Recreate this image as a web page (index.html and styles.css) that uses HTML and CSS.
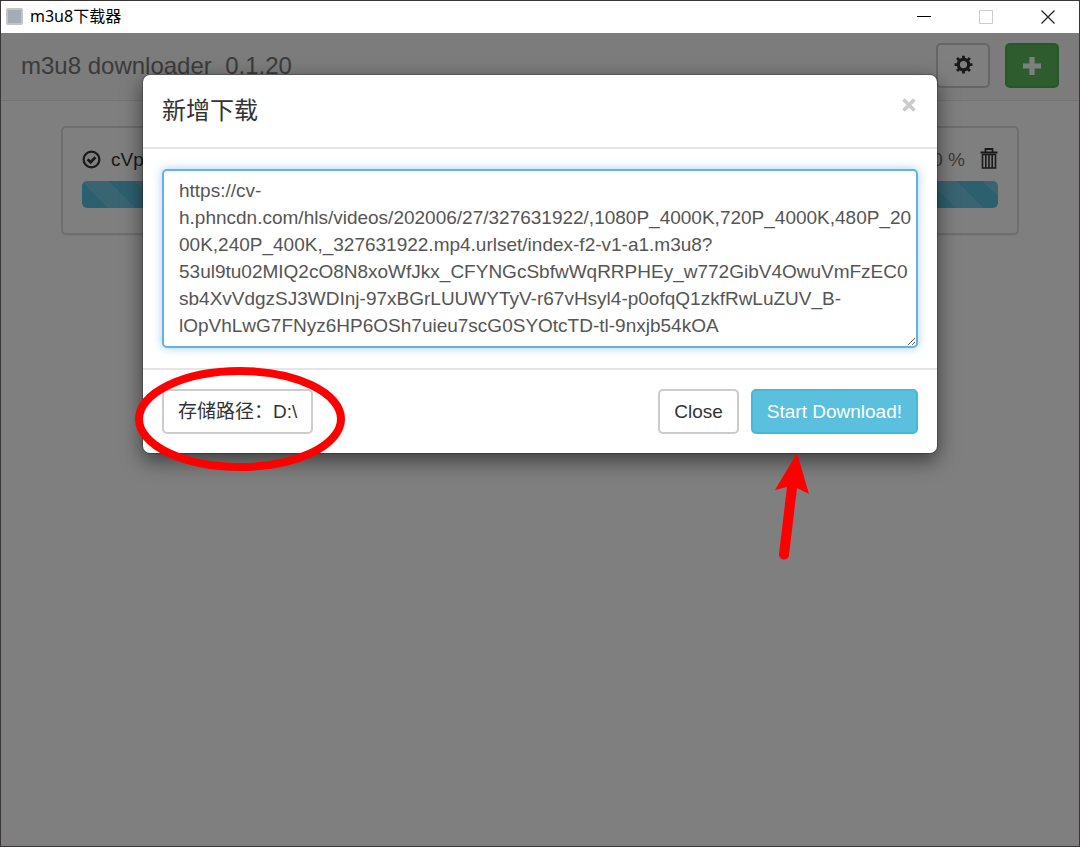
FILE: index.html
```html
<!DOCTYPE html>
<html lang="zh-CN">
<head>
  <meta charset="UTF-8" />
  <meta name="viewport" content="width=device-width, initial-scale=1" />
  <title>m3u8下载器</title>
  <link rel="stylesheet" href="styles.css">
</head>
<body>
  <div class="window">
    <div class="titlebar">
      <span class="app-icon"></span>
      <span class="app-name">m3u8下载器</span>
      <button class="win-btn" type="button" aria-label="Minimize">
        <svg width="14" height="14" viewBox="0 0 14 14"><path d="M0 6.5h14" stroke="#000" /></svg>
      </button>
      <button class="win-btn" type="button" aria-label="Maximize" disabled>
        <svg width="14" height="14" viewBox="0 0 14 14"><path d="M.5 .5h13v13h-13z" fill="none" stroke="#ccc" /></svg>
      </button>
      <button class="win-btn" type="button" aria-label="Close window">
        <svg width="14" height="14" viewBox="0 0 14 14"><path d="M.5 .5l13 13M13.5 .5l-13 13" stroke="#222" stroke-width="1.2" /></svg>
      </button>
    </div>

    <div class="app">
      <header class="navbar">
        <span class="brand">m3u8 downloader&nbsp; 0.1.20</span>
        <button class="btn btn-default btn-icon" type="button" aria-label="Settings">
          <svg width="19" height="22" viewBox="0 0 20 23">
            <circle cx="10" cy="10" r="5.5" fill="none" stroke="#333" stroke-width="3.4" />
            <path d="M10 0.6v4M10 15.4v4M0.6 10h4M15.4 10h4M3.2 3.2l2.6 2.6M14.2 14.2l2.6 2.6M16.8 3.2l-2.6 2.6M5.8 14.2l-2.6 2.6" stroke="#333" stroke-width="3" />
          </svg>
        </button>
        <button class="btn btn-success btn-icon" type="button" aria-label="Add">
          <svg width="20" height="20" viewBox="0 0 20 20"><path d="M7.4 1h5.2v6.4H19v5.2h-6.4V19H7.4v-6.4H1V7.4h6.4z" fill="#fff" /></svg>
        </button>
      </header>

      <main class="tasks">
        <div class="task">
          <div class="task-row">
            <svg width="19" height="19" viewBox="0 0 19 19">
              <circle cx="9.5" cy="9.5" r="7.9" fill="none" stroke="#333" stroke-width="2.2" />
              <path d="M5.6 9.2l3 3 4.8-5" fill="none" stroke="#333" stroke-width="2.8" />
            </svg>
            <span class="task-name">cVp</span>
            <span class="task-percent">0 %</span>
            <button class="trash" type="button" aria-label="Delete">
              <svg width="18" height="24" viewBox="0 0 18 24">
                <path d="M5.5 4V1h7v3M0.5 4.5h17" fill="none" stroke="#333" stroke-width="1.8" />
                <path d="M2.5 6.5h13v13.5h-13zM5.8 7v13M9 7v13M12.2 7v13" fill="none" stroke="#333" stroke-width="1.6" />
              </svg>
            </button>
          </div>
          <div class="progress"></div>
        </div>
      </main>

      <div class="backdrop">
        <div class="modal" role="dialog" aria-labelledby="modalTitle">
          <div class="modal-header">
            <h4 class="modal-title" id="modalTitle">新增下载</h4>
            <button class="close" type="button" aria-label="Close dialog">
              <svg width="14" height="14" viewBox="0 0 14 14"><path d="M1.5 1.5l11 11M12.5 1.5l-11 11" stroke="#ccc" stroke-width="3.8" /></svg>
            </button>
          </div>
          <div class="modal-body">
            <textarea class="url" id="url" aria-label="m3u8" spellcheck="false">https://cv-h.phncdn.com/hls/videos/202006/27/327631922/,1080P_4000K,720P_4000K,480P_2000K,240P_400K,_327631922.mp4.urlset/index-f2-v1-a1.m3u8?53ul9tu02MIQ2cO8N8xoWfJkx_CFYNGcSbfwWqRRPHEy_w772GibV4OwuVmFzEC0sb4XvVdgzSJ3WDInj-97xBGrLUUWYTyV-r67vHsyl4-p0ofqQ1zkfRwLuZUV_B-lOpVhLwG7FNyz6HP6OSh7uieu7scG0SYOtcTD-tl-9nxjb54kOA</textarea>
          </div>
          <div class="modal-footer">
            <div class="marked path">
              <button class="btn btn-default" type="button">存储路径：D:\</button>
              <svg class="mark-ring" width="210" height="104" viewBox="0 0 210 104">
                <ellipse cx="105" cy="52" rx="101" ry="48" fill="none" stroke="#f00" stroke-width="8" />
              </svg>
            </div>
            <button class="btn btn-default" type="button">Close</button>
            <div class="marked">
              <button class="btn btn-info" type="button">Start Download!</button>
              <svg class="mark-arrow" width="36" height="108" viewBox="0 0 36 108">
                <path d="M22 0l12 41-12-6-8 67a5 5 0 0 1-10-1l8-67-12 3z" fill="#f00" />
              </svg>
            </div>
          </div>
        </div>
      </div>
    </div>
  </div>

  <script>
    // put the cursor at the end of the address
    const url = document.getElementById('url');
    url.focus();
    url.setSelectionRange(url.value.length, url.value.length);
  </script>
</body>
</html>
```
FILE: styles.css
```css
* {
  box-sizing: border-box;
}
body {
  margin: 0;
  font-family: "Liberation Sans", Arial, "Noto Sans CJK SC", sans-serif;
  font-size: 19px;
  line-height: 27px;
  color: #333;
}
button,
textarea {
  font: inherit;
}
svg {
  display: block;
}
.window {
  display: flex;
  flex-direction: column;
  min-height: 100vh;
  border: 1px solid #3b3739;
  background-color: #fff;
}
.titlebar {
  display: flex;
  align-items: center;
  height: 32px;
  padding-left: 5px;
  padding-bottom: 1px;
}
.app-icon {
  width: 17px;
  height: 17px;
  border: 2px solid #c4c4c4;
  border-radius: 2px;
  background-color: #a5acb8;
}
.app-name {
  margin-left: 7px;
  margin-right: auto;
  font-family: "Noto Sans", "Noto Sans CJK SC", sans-serif;
  font-size: 16px;
  color: #000;
}
.win-btn {
  display: flex;
  justify-content: center;
  width: 62px;
  padding: 0;
  border: none;
  background: none;
}
.app {
  position: relative;
  flex: 1;
}
.navbar {
  display: flex;
  align-items: center;
  gap: 15px;
  height: 68px;
  padding: 0 20px 2px;
  border-bottom: 1px solid #e7e7e7;
  background-color: #f8f8f8;
}
.brand {
  margin-right: auto;
  font-size: 24px;
  color: #777;
}
.btn {
  height: 45px;
  padding: 0 14px;
  border: 2px solid #ccc;
  border-radius: 5px;
  white-space: nowrap;
  cursor: pointer;
}
.btn-icon {
  display: flex;
  align-items: center;
  justify-content: center;
  width: 54px;
}
.btn-default {
  background-color: #fff;
  color: #333;
}
.btn-success {
  background-color: #5cb85c;
  border-color: #4cae4c;
}
.btn-info {
  background-color: #5bc0de;
  border-color: #46b8da;
  color: #fff;
}
.tasks {
  padding: 25px 60px;
}
.task {
  padding: 18px 19px 25px;
  border: 2px solid #ddd;
  border-radius: 5px;
  box-shadow: 0 1px 1px rgba(0, 0, 0, 0.05);
}
.task-row {
  display: flex;
  align-items: center;
  margin-bottom: 8px;
}
.task-name {
  margin-left: 10px;
  margin-right: auto;
}
.task-percent {
  margin-right: 15px;
  color: #777;
}
.trash {
  padding: 0;
  border: none;
  background: none;
  cursor: pointer;
}
.progress {
  height: 27px;
  border-radius: 5px;
  background-color: #5bc0de;
  background-image: linear-gradient(45deg, rgba(255, 255, 255, 0.15) 25%, transparent 25%, transparent 50%, rgba(255, 255, 255, 0.15) 50%, rgba(255, 255, 255, 0.15) 75%, transparent 75%);
  background-size: 53px 53px;
}
.backdrop {
  position: absolute;
  inset: 0;
  padding: 41px 20px;
  background-color: rgba(0, 0, 0, 0.5);
}
.modal {
  max-width: 796px;
  margin: 0 auto;
  border: 1px solid rgba(0, 0, 0, 0.2);
  border-radius: 8px;
  background-color: #fff;
  background-clip: padding-box;
  box-shadow: 0 7px 20px rgba(0, 0, 0, 0.5);
}
.modal-header {
  display: flex;
  justify-content: space-between;
  padding: 19px;
  border-bottom: 2px solid #e5e5e5;
}
.modal-title {
  margin: 0;
  font-size: 24px;
  font-weight: 400;
  line-height: 34px;
}
.close {
  height: 22px;
  padding: 3px 2px;
  border: none;
  background: none;
  cursor: pointer;
}
.modal-body {
  padding: 20px 19px;
}
.url {
  display: block;
  width: 100%;
  height: 179px;
  padding: 6px 3px 6px 15px;
  border: 2px solid #66afe9;
  border-radius: 5px;
  outline: none;
  overflow: hidden;
  background-color: #fff;
  color: #555;
  box-shadow: 0 0 10px rgba(102, 175, 233, 0.6);
}
.modal-footer {
  display: flex;
  align-items: center;
  gap: 12px;
  padding: 19px;
  border-top: 2px solid #e5e5e5;
}
.path {
  margin-right: auto;
}
/* red marks drawn over the dialog */
.marked {
  position: relative;
}
.mark-ring,
.mark-arrow {
  position: absolute;
  pointer-events: none;
}
.mark-ring {
  top: -22px;
  left: -27px;
}
.mark-arrow {
  top: 64px;
  left: 24px;
}
```
